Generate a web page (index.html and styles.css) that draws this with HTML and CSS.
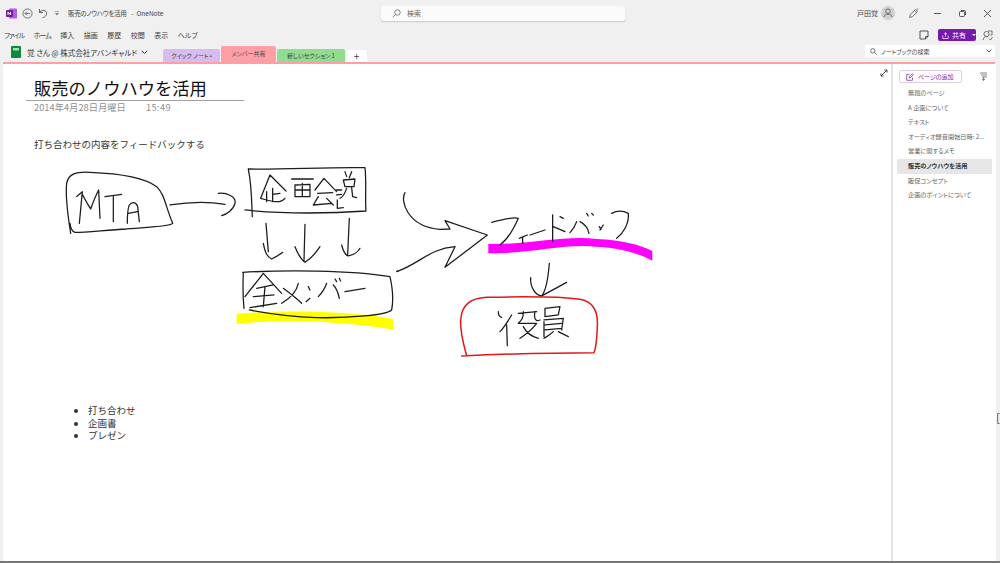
FILE: index.html
```html
<!DOCTYPE html>
<html lang="ja">
<head>
  <meta charset="UTF-8">
  <title>販売のノウハウを活用 - OneNote</title>
  <link rel="stylesheet" href="styles.css">
</head>
<body>
  <header class="titlebar">
    <div class="qat">
      <svg class="logo" width="11" height="11" viewBox="0 0 11 11"><rect x="3" y="0.5" width="8" height="10" rx="1" fill="#b05fd8"/><rect y="2" width="7" height="7" rx="1" fill="#7719aa"/><path d="M2 7V4l2.600 3V4" fill="none" stroke="#fff" stroke-width="1"/></svg>
      <svg class="qat-back" width="11" height="11" viewBox="0 0 11 11"><circle cx="5.500" cy="5.500" r="4.600" fill="none" stroke="#555" stroke-width=".8"/><path d="M8 5.500H3M5 3.500l-2 2 2 2" fill="none" stroke="#555" stroke-width=".8"/></svg>
      <svg class="qat-undo" width="10" height="11" viewBox="0 0 10 11"><path d="M1.500 1v3.500H5M1.500 4.500C3 2 7 1.500 8.300 4c1 2.500-.8 5-3.800 5.800" fill="none" stroke="#555" stroke-width=".9"/></svg>
      <svg class="qat-more" width="6" height="6" viewBox="0 0 6 6"><path d="M1 1.500h4M1.500 3.500h3l-1.500 1.500z" fill="#666" stroke="#666" stroke-width=".5"/></svg>
      <span class="doc-title">販売のノウハウを活用<span class="doc-app">-&nbsp;&nbsp;OneNote</span></span>
    </div>
    <div class="search">
      <svg width="9" height="9" viewBox="0 0 9 9"><circle cx="5.500" cy="3.500" r="2.700" fill="none" stroke="#666" stroke-width=".8"/><path d="M3.500 5.500L.8 8.300" stroke="#666" stroke-width=".8"/></svg>
      <span>検索</span>
    </div>
    <div class="window">
      <span class="user">戸田覚</span>
      <svg class="avatar" width="14" height="14" viewBox="0 0 14 14"><circle cx="7" cy="7" r="7" fill="#d0d0d0"/><circle cx="7" cy="5.300" r="2.300" fill="none" stroke="#555" stroke-width=".8"/><path d="M3 11c.4-4 7.600-4 8 0" fill="none" stroke="#555" stroke-width=".8"/></svg>
      <svg class="pen" width="11" height="11" viewBox="0 0 11 11"><path d="M1.500 9.500l.8-3L7.500 1.500l2 2-5 5.200zM6.500 2.500l2 2" fill="none" stroke="#555" stroke-width=".8"/><circle cx="9.500" cy="1.200" r="1" fill="#7fb6d8"/></svg>
      <svg class="win-btn win-min" width="9" height="9" viewBox="0 0 9 9"><path d="M1 4.500h7" stroke="#444" stroke-width=".9"/></svg>
      <svg class="win-btn" width="9" height="9" viewBox="0 0 9 9"><rect x="1.500" y="2.500" width="5" height="5" rx="1" fill="none" stroke="#444" stroke-width=".9"/><path d="M3 1.500h3.500a1 1 0 0 1 1 1V6" fill="none" stroke="#444" stroke-width=".9"/></svg>
      <svg class="win-btn" width="9" height="9" viewBox="0 0 9 9"><path d="M1 1l7 7M8 1L1 8" stroke="#444" stroke-width=".9"/></svg>
    </div>
  </header>

  <nav class="menubar">
    <ul class="menu">
      <li class="kana">ファイル</li><li class="kana">ホーム</li><li>挿入</li><li>描画</li><li>履歴</li><li>校閲</li><li>表示</li><li>ヘルプ</li>
    </ul>
    <div class="menu-tools">
      <svg width="10" height="10" viewBox="0 0 10 10"><path d="M1 1h8v5.500L6.500 9H1zM9 6.500H6.500V9" fill="none" stroke="#444" stroke-width=".9"/></svg>
      <button class="share">
        <svg width="7" height="7" viewBox="0 0 7 7"><path d="M.8 3.500v3h5.400v-3M3.500 4.500V.8M2 2.200L3.500.8 5 2.200" fill="none" stroke="#fff" stroke-width=".7"/></svg>
        <span>共有</span><i class="share-split"></i><i class="caret"></i>
      </button>
      <svg width="11" height="11" viewBox="0 0 11 11"><circle cx="4.500" cy="4" r="2.600" fill="none" stroke="#555" stroke-width=".8"/><path d="M1 10c.3-3 3-4 4.500-3.500M6 1h4v4H8.500M7 8.500l1.500 1.500L10.500 7" fill="none" stroke="#555" stroke-width=".8"/></svg>
    </div>
  </nav>

  <div class="sections">
    <div class="notebook">
      <svg width="10" height="12" viewBox="0 0 10 12"><rect width="10" height="12" rx="1" fill="#0d8a3e"/><rect x="2" y="2" width="6" height="2.500" fill="#9fe0b4"/></svg>
      <span>覚 さん @ 株式会社アバンギャルド</span>
      <svg class="notebook-chevron" width="7" height="5" viewBox="0 0 7 5"><path d="M.8.800L3.500 3.500 6.200.8" fill="none" stroke="#333" stroke-width="1"/></svg>
    </div>
    <div class="tabs">
      <div class="tab tab-purple">クイック ノート •</div>
      <div class="tab tab-pink">メンバー共有</div>
      <div class="tab tab-green">新しいセクション 1</div>
      <div class="tab tab-add">+</div>
    </div>
    <div class="nb-search">
      <svg width="7" height="7" viewBox="0 0 7 7"><circle cx="2.800" cy="2.800" r="2.200" fill="none" stroke="#555" stroke-width=".8"/><path d="M4.400 4.400L6.700 6.700" stroke="#555" stroke-width=".8"/></svg>
      <span>ノートブックの検索</span>
      <svg class="nb-chevron" width="6" height="4" viewBox="0 0 6 4"><path d="M.6.600L3 3 5.400.6" fill="none" stroke="#333" stroke-width=".9"/></svg>
    </div>
  </div>
  <div class="accent"></div>

  <div class="workspace">
    <main class="page">
      <div class="note-title">
        <h1>販売のノウハウを活用</h1>
        <p class="stamp"><span>2014年4月28日月曜日</span><span class="stamp-time">15:49</span></p>
      </div>
      <p class="note-text">打ち合わせの内容をフィードバックする</p>

      <svg class="ink" width="888" height="498" viewBox="3 64 888 498">
        <g class="ink-group" transform="translate(50 155) scale(.3333)">
          <path class="ink-yellow" d="M560 476C700 465 900 468 1030 492L1030 524C900 500 700 490 560 507Z"/>
          <path d="M62 235C55 190 45 130 50 85C55 55 80 50 120 52C200 55 280 65 320 95C345 120 345 150 368 205C360 215 300 215 230 222C170 225 110 232 75 232C68 230 62 222 60 205"/>
          <path d="M80 125C90 115 95 112 97 110L88 205M97 118C105 135 115 150 122 162C130 140 138 120 146 105L150 190M165 125L215 118M190 125L190 200M232 205C232 180 233 160 238 150C245 140 258 140 263 155L268 200M235 175L262 170"/>
          <path d="M360 150C420 140 480 140 525 148M505 115C530 112 560 125 555 145C550 165 530 178 515 182"/>
          <path d="M595 42C605 90 605 140 607 185M595 42C680 45 850 35 945 38C950 80 945 130 948 168C850 175 700 178 585 165"/>
          <path d="M632 130L660 60L708 108M632 130C650 135 690 150 705 130M668 100L668 140M668 118L690 115M650 110L650 140"/>
          <path d="M725 72L790 72M735 90L735 125L780 125L780 88ZM757 85L757 122M738 105L778 105"/>
          <path d="M795 105L822 70L860 110M803 115L848 113M805 125L790 150L845 145M830 130L850 150"/>
          <path d="M858 105L875 105M860 120L875 118M862 135L862 160L880 158M885 50L890 65M905 50L898 68M880 75L915 72L912 95L885 95ZM890 100C885 115 880 125 870 130M905 98L908 125L920 128"/>
          <path d="M648 205L655 290M640 265C645 290 650 305 665 312C680 305 690 298 698 292"/>
          <path d="M765 208L762 320M735 275C745 300 755 315 765 322C785 310 800 290 810 275"/>
          <path d="M898 190L893 300M875 270C880 290 885 300 895 303C910 300 925 290 930 280"/>
          <path d="M580 355C578 400 580 440 582 460M578 352C700 345 900 345 1020 365C1028 400 1030 440 1025 465C1010 480 900 490 800 488C720 485 650 475 598 465"/>
          <path d="M585 425L640 355L695 415M620 400L670 390M645 395L640 455M610 425L672 420M600 458L680 445"/>
          <path d="M700 400C720 415 745 435 755 445M745 385C740 410 720 430 695 445M775 395L780 405M768 440L780 430"/>
          <path d="M830 385C825 400 815 415 805 425M850 390C860 400 865 415 868 430M855 372L860 380M868 370L872 378M885 410L945 400"/>
          <path d="M1042 348L1044 349"/>
        </g>
        <g class="ink-group" transform="translate(390 180) scale(.3333)">
          <path class="ink-magenta" d="M295 192C420 195 520 165 620 177C700 180 750 195 787 213L787 242C750 222 700 205 620 200C520 190 420 222 295 220Z"/>
          <path d="M45 38C30 60 50 140 150 148L180 147L165 122L292 165L165 262L195 200C120 205 90 250 20 275"/>
          <path d="M305 127C340 118 375 112 385 115C370 150 350 180 330 195M388 175L412 165M398 172L398 190M420 165L465 150M488 105L488 185M490 140L525 155M510 110L520 115"/>
          <path d="M560 125C555 140 548 150 540 158M570 125C590 135 595 150 597 160M590 100L595 108M605 100L610 105M628 140L633 148M640 135L630 150M665 100C680 92 700 92 715 100C718 130 700 160 680 175"/>
          <path d="M478 250C475 290 470 330 455 348C435 345 420 320 422 293M455 348C480 335 505 320 530 307"/>
          <path class="ink-red" d="M230 527C220 490 210 460 212 420C215 375 240 355 290 352C380 350 500 348 570 358C610 365 625 395 622 440C620 480 620 500 612 518C500 518 350 522 215 528"/>
          <path d="M325 395C325 405 328 410 335 412M365 405C350 430 340 445 330 455M350 435L352 497M385 400L440 395M400 395C400 415 395 420 385 430M435 395C430 420 440 425 450 420M385 430L440 430C425 450 405 465 390 475M400 440C410 460 425 470 445 475"/>
          <path d="M465 385L510 380L505 405L465 410ZM462 425L462 470M462 420L520 415L515 450M465 435L515 430M465 450L515 445M490 455C480 465 470 470 462 475M505 455L535 470"/>
        </g>
      </svg>

      <ul class="note-list">
        <li>打ち合わせ</li>
        <li>企画書</li>
        <li>プレゼン</li>
      </ul>

      <svg class="expand" width="8" height="8" viewBox="0 0 8 8"><path d="M1 7l6-6M4.500 1H7v2.500M1 4.500V7h2.500" fill="none" stroke="#333" stroke-width=".9"/></svg>
    </main>

    <aside class="pages">
      <div class="pages-top">
        <button class="add-page">
          <svg width="8" height="8" viewBox="0 0 8 8"><path d="M6.500 4.500V7.300H.7V1.500H3.500M3 5l.3-1.300L6.500.7l1 1L4.300 4.700z" fill="none" stroke="#7719aa" stroke-width=".7"/></svg>
          <span>ページの追加</span>
        </button>
        <svg class="sort" width="9" height="9" viewBox="0 0 9 9"><path d="M1 1h7M2 3h6M3 5h5M4.500 5v3.500M3 7l1.500 1.500L6 7" fill="none" stroke="#666" stroke-width=".8"/></svg>
      </div>
      <ul class="page-list">
        <li>無題のページ</li>
        <li>A 企画について</li>
        <li>テキスト</li>
        <li>オーディオ録音開始日時: 2...</li>
        <li>営業に関するメモ</li>
        <li class="current">販売のノウハウを活用</li>
        <li>販促コンセプト</li>
        <li>企画のポイントについて</li>
      </ul>
    </aside>
  </div>
  <svg class="cursor" width="3" height="11" viewBox="0 0 3 11"><path d="M2.500.5H.7V10.500H2.500" fill="none" stroke="#444" stroke-width=".8"/></svg>
</body>
</html>
```

FILE: styles.css
```css
html, body {
  margin: 0;
  height: 100%;
}
body {
  width: 1000px;
  height: 563px;
  box-sizing: border-box;
  overflow: hidden;
  display: flex;
  flex-direction: column;
  background: #f0f0f0;
  border-bottom: 2px solid #777;
  color: #333;
  font-family: "Noto Sans CJK JP", "Liberation Sans", sans-serif;
  position: relative;
}
svg {
  display: block;
  flex: none;
}
ul {
  list-style: none;
  margin: 0;
  padding: 0;
}
button {
  font: inherit;
  border: 0;
  padding: 0;
}

/* app chrome uses proportional kana, the note body does not */
.titlebar, .menubar, .sections, .pages {
  font-feature-settings: "palt";
  white-space: nowrap;
}

/* title bar */
.titlebar {
  height: 26px;
  display: flex;
  align-items: center;
  position: relative;
  font-size: 7px;
}
.qat {
  display: flex;
  align-items: center;
  padding-left: 6px;
  width: 375px;
}
.qat-back { margin-left: 5px; }
.qat-undo { margin-left: 5px; }
.qat-more { margin-left: 6px; }
.doc-title {
  margin-left: 8px;
  font-size: 6.500px;
  letter-spacing: -.3px;
  color: #444;
}
.doc-app {
  margin-left: 5px;
  letter-spacing: 0;
}
.search {
  width: 244px;
  height: 15px;
  box-sizing: border-box;
  display: flex;
  align-items: center;
  gap: 6px;
  padding-left: 11px;
  background: #fafafa;
  border-radius: 2px;
  box-shadow: 0 1px 1.500px #c8c8c8;
  color: #666;
}
.window {
  display: flex;
  align-items: center;
  margin-left: auto;
  padding-right: 8px;
}
.user { color: #444; }
.avatar { margin-left: 3px; }
.pen { margin-left: 13px; }
.win-btn { margin-left: 16px; }
.win-min { margin-left: 14px; }

/* menu row */
.menubar {
  height: 18px;
  display: flex;
  align-items: center;
  justify-content: space-between;
  font-size: 7px;
  color: #444;
}
.menu {
  display: flex;
  gap: 9.500px;
  padding-left: 4px;
}
.menu .kana { letter-spacing: -1px; }
.menu-tools {
  display: flex;
  align-items: center;
  padding-right: 7px;
}
.share {
  width: 38px;
  height: 12px;
  margin: 0 6px 0 9px;
  background: #7719aa;
  color: #fff;
  border-radius: 2px;
  display: flex;
  align-items: center;
  padding-left: 4px;
  gap: 3px;
  font-size: 7px;
  white-space: nowrap;
}
.share-split { flex: 1; }
.caret {
  width: 0;
  height: 0;
  margin-right: 4px;
  border: 2px solid transparent;
  border-top-color: #fff;
  border-bottom: 0;
}

/* notebook + section tabs */
.sections {
  height: 18px;
  display: flex;
  align-items: flex-end;
}
.notebook {
  width: 163px;
  height: 16px;
  box-sizing: border-box;
  padding-left: 11px;
  display: flex;
  align-items: center;
  gap: 6px;
  align-self: flex-start;
  font-size: 7.500px;
  color: #333;
}
.notebook-chevron { margin-left: -2px; }
.tabs {
  display: flex;
  align-items: flex-end;
  gap: 1px;
}
.tab {
  height: 13px;
  line-height: 13px;
  text-align: center;
  font-size: 6px;
  border-radius: 2px 2px 0 0;
  color: #444;
}
.tab-purple { width: 57px; background: #d6bcf0; }
.tab-pink { width: 55px; height: 16px; line-height: 16px; background: #fe9ea5; }
.tab-green { width: 68px; background: #92dc92; }
.tab-add { width: 21px; height: 12px; line-height: 12px; background: #fff; font-size: 10px; }
.nb-search {
  width: 130px;
  height: 12px;
  box-sizing: border-box;
  margin: 0 5px 4px auto;
  padding: 0 3px 0 5px;
  display: flex;
  align-items: center;
  gap: 4px;
  align-self: center;
  background: #fff;
  font-size: 6px;
  color: #444;
}
.nb-chevron { margin-left: auto; }
.accent {
  height: 2px;
  margin: 0 5px 0 3px;
  background: #fe9ea5;
}

/* page area */
.workspace {
  flex: 1;
  display: flex;
  background: #fff;
  margin: 0 4px 0 3px;
}
.page {
  flex: 1;
  position: relative;
  overflow: hidden;
}
.note-title {
  position: absolute;
  left: 23px;
  top: 11px;
  width: 218px;
}
.note-title h1 {
  margin: 0;
  padding-left: 8px;
  font-size: 17.300px;
  line-height: 25px;
  font-weight: 400;
  color: #111;
  border-bottom: 1px solid #a0a0a0;
}
.stamp {
  margin: 0;
  padding-left: 8px;
  display: flex;
  gap: 20px;
  font-size: 9.300px;
  line-height: 13px;
  color: #909090;
}
.stamp-time { letter-spacing: .4px; }
.note-text {
  position: absolute;
  left: 31px;
  top: 73px;
  margin: 0;
  font-size: 9.500px;
  line-height: 14px;
  color: #333;
}
.ink {
  position: absolute;
  left: 0;
  top: 0;
}
.ink-group path {
  fill: none;
  stroke: #1c1c1c;
  stroke-width: 3.800;
  stroke-linecap: round;
  stroke-linejoin: round;
}
.ink-group .ink-yellow {
  fill: #ffff00;
  stroke: none;
}
.ink-group .ink-magenta {
  fill: #ff00ff;
  stroke: none;
}
.ink-group .ink-red {
  stroke: #e01818;
  stroke-width: 4.500;
}
.note-list {
  position: absolute;
  left: 85px;
  top: 340px;
  list-style: disc;
  font-size: 9.500px;
  line-height: 12.500px;
  color: #333;
}
.expand {
  position: absolute;
  left: 877px;
  top: 5px;
}

/* page list */
.pages {
  width: 103px;
  flex: none;
  border-left: 2px solid #e4e4e4;
  font-size: 6.200px;
  color: #666;
}
.pages-top {
  display: flex;
  align-items: center;
  justify-content: space-between;
  padding: 6px 8px 0 6px;
}
.add-page {
  width: 63px;
  height: 13px;
  box-sizing: border-box;
  display: flex;
  align-items: center;
  gap: 4px;
  padding-left: 6px;
  background: #fff;
  border: 1px solid #dccdec;
  border-radius: 2px;
  color: #7719aa;
  font-size: 6px;
}
.page-list {
  margin-top: 3px;
  padding: 0 4px;
}
.page-list li {
  height: 14.600px;
  line-height: 14.600px;
  padding-left: 11px;
}
.page-list .current {
  background: #e6e6e6;
  font-weight: 700;
  color: #333;
}
.cursor {
  position: absolute;
  left: 997px;
  top: 413px;
}
```
